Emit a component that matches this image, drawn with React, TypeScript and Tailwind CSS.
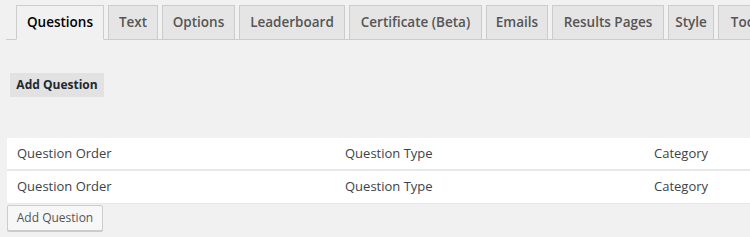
const tabs = [
  { label: 'Questions', width: 'w-[88px]', active: true },
  { label: 'Text', width: 'w-[50px]' },
  { label: 'Options', width: 'w-[73px]' },
  { label: 'Leaderboard', width: 'w-[106px]' },
  { label: 'Certificate (Beta)', width: 'w-[133px]' },
  { label: 'Emails', width: 'w-[62px]' },
  { label: 'Results Pages', width: 'w-[112px]' },
  { label: 'Style', width: 'w-[46px]' },
  { label: 'Tools', width: 'w-[60px]' },
];

const rows = [1, 2];

const App = () => {
  return (
    <div
      className="h-[237px] w-[750px] overflow-hidden bg-[#f1f1f1] text-[#32373c]"
      style={{ fontFamily: '"Open Sans", "Liberation Sans", sans-serif' }}
    >
      <div className="pt-[5px]">
        <div className="ml-[6px] flex items-end gap-[4px] whitespace-nowrap border-b border-[#cccccc] pl-[10px]">
          {tabs.map(tab => (
            <div
              key={tab.label}
              className={`-mb-px shrink-0 border border-[#cccccc] py-[5px] text-center text-[13.5px] font-semibold leading-[23px] ${tab.width} ${
                tab.active
                  ? 'border-b-[#f1f1f1] bg-[#f1f1f1] text-[#000000]'
                  : 'bg-[#e5e5e5] text-[#555555]'
              }`}
            >
              {tab.label}
            </div>
          ))}
        </div>
      </div>

      <div className="ml-[10px] mt-[31px]">
        <button className="h-[24px] w-[94px] bg-[#e2e2e2] text-[12px] font-bold text-[#23282d]">
          Add Question
        </button>
      </div>

      <div className="ml-[7px] mt-[41px] w-[780px] bg-white">
        {rows.map((row, i) => (
          <div
            key={row}
            className={`grid h-[33px] grid-cols-[328px_309px_1fr] items-center px-[10px] text-[13px] text-[#3c434a] ${
              i === 0 ? 'border-b-2 border-[#e8e8e8]' : 'border-b border-[#e8e8e8]'
            }`}
          >
            <span>Question Order</span>
            <span>Question Type</span>
            <span>Category</span>
          </div>
        ))}
      </div>

      <div className="ml-[7px]">
        <button className="h-[26px] w-[96px] rounded-[2px] border border-[#cccccc] bg-[#f7f7f7] text-[12px] text-[#555555] shadow-[0_1px_0_#cccccc]">
          Add Question
        </button>
      </div>
    </div>
  );
};

export default App;
